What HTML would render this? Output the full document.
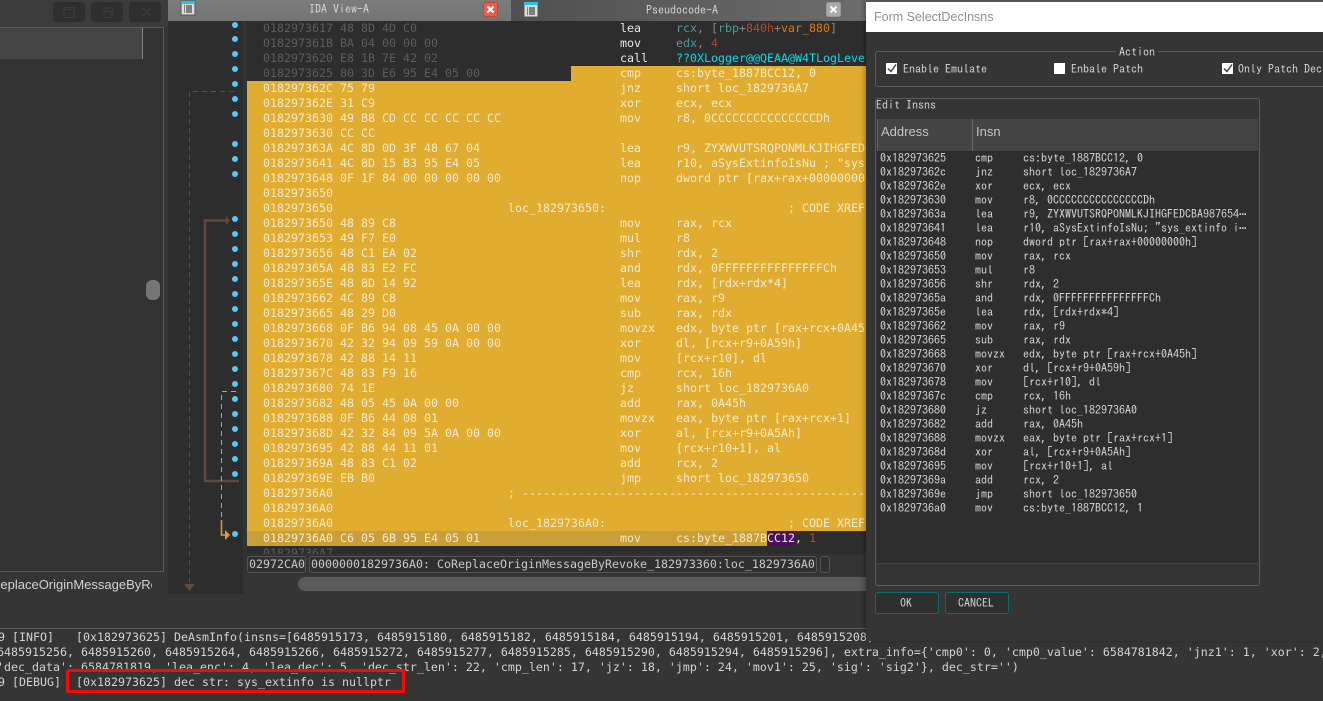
<!DOCTYPE html>
<html><head><meta charset="utf-8"><style>
html,body{margin:0;padding:0;background:#333;}
#r{position:relative;width:1323px;height:701px;overflow:hidden;background:#353535;font-family:"DejaVu Sans Mono",monospace;}
#r div,#r pre,#r svg{position:absolute;margin:0;}
pre{font:11.63px/15px "DejaVu Sans Mono",monospace;color:#f6ead0;white-space:pre;}
.d{color:#5c5c5c}.w{color:#e8e8e8}.t{color:#4f9a9a}.r{color:#b8452c}.o{color:#e07a10}.g{color:#8a8a8a}.c{color:#00dcec}
.log{font:11.63px/15px "DejaVu Sans Mono",monospace;color:#d2d2d2;white-space:pre;}
#r pre.tb{font:12px/14px "IPAGothic",monospace;color:#d4d4d4;white-space:pre;}
.lbl{font:12px/14px "IPAGothic",monospace;color:#d4d4d4;white-space:pre;}
.dot{width:6px;height:6px;border-radius:50%;background:#55c8f8;left:232px;}
.box{border:1px solid #555;border-radius:3px;box-sizing:border-box;background:#303030;}
.btn{background:#2f2f2f;border-radius:3px;top:2px;height:20px;width:32px;}
.cb{width:11px;height:11px;background:#fff;}
</style></head><body><div id="r">

<!-- left panel -->
<div style="left:0;top:0;width:168px;height:27px;background:#3c3c3c"></div>
<div class="btn" style="left:53px"></div>
<div class="btn" style="left:91px"></div>
<div class="btn" style="left:129px"></div>
<svg style="left:53px;top:2px" width="108" height="20"><path d="M11 5.500h10v10h-10zM11 7.500h10" fill="none" stroke="#3c3c3c"/><path d="M51 9.500h7v6h-7zM53 9v-3h7v6h-2" fill="none" stroke="#3c3c3c"/><path d="M90 6l8 8M98 6l-8 8" fill="none" stroke="#3c3c3c" stroke-width="1.500"/></svg>
<div style="left:0;top:27px;width:164px;height:545px;box-sizing:border-box;border:1px solid #5c5c5c;border-left:0;background:#333"></div>
<div style="left:0;top:28px;width:142px;height:31px;background:#454545"></div>
<div style="left:142px;top:28px;width:1px;height:31px;background:#888"></div>
<div style="left:146px;top:280px;width:14px;height:20px;border-radius:6px;background:#767676"></div>
<div style="left:0;top:577px;width:152px;height:16px;overflow:hidden;font:13px/16px 'Liberation Sans',sans-serif;color:#d2d2d2;white-space:nowrap"><span style="position:relative;left:-9px">ReplaceOriginMessageByRevoke</span></div>

<!-- gutter -->
<div style="left:168px;top:21px;width:75px;height:573px;background:#2d2d2d"></div>
<div style="left:243px;top:21px;width:4px;height:533px;background:#333"></div>

<!-- tabs -->
<div style="left:168px;top:0;width:343px;height:21px;background:linear-gradient(#7c7c7c,#747474)"></div>
<div style="left:511px;top:0;width:355px;height:21px;background:linear-gradient(90deg,#505050,#6c6c6c)"></div>
<svg style="left:180px;top:0" width="16" height="16" viewBox="0 0 16 16"><rect x="1" y="1" width="14" height="14" fill="#dcdcdc" stroke="#555"/><rect x="1" y="1" width="14" height="3" fill="#18c8f0"/><path d="M4 6h1M4 8h1M4 10h1M4 12h1M6 6h6M6 8h6M6 10h6M6 12h6" stroke="#222"/></svg>
<svg style="left:523px;top:2px" width="16" height="16" viewBox="0 0 16 16"><rect x="1" y="1" width="14" height="14" fill="#dcdcdc" stroke="#555"/><rect x="1" y="0" width="14" height="3" fill="#18c8f0"/><path d="M4 6h1M4 8h1M4 10h1M4 12h1M6 6h6M6 8h6M6 10h6M6 12h6" stroke="#222"/></svg>
<div class="lbl" style="left:309px;top:2px">IDA View-A</div>
<div class="lbl" style="left:646px;top:3px">Pseudocode-A</div>
<svg style="left:483px;top:2px" width="15" height="15" viewBox="0 0 15 15"><rect x=".5" y=".5" width="14" height="14" rx="2" fill="#e8604a" stroke="#c8452f"/><path d="M4.500 4.500l6 6M10.500 4.500l-6 6" stroke="#fff" stroke-width="2"/></svg>
<svg style="left:826px;top:2px" width="15" height="15" viewBox="0 0 15 15"><rect x=".5" y=".5" width="14" height="14" rx="2" fill="#aaa" stroke="#999"/><path d="M4.500 4.500l6 6M10.500 4.500l-6 6" stroke="#fff" stroke-width="2"/></svg>

<!-- listing -->
<div style="left:247px;top:21px;width:619px;height:533px;overflow:hidden;background:#2d2d2d">
<div style="left:324px;top:45px;width:295px;height:15px;background:#e0ad30"></div>
<div style="left:0;top:60px;width:619px;height:450px;background:#e0ad30"></div>
<div style="left:0;top:510px;width:520px;height:15px;background:#c99f3a"></div>
<div style="left:520px;top:510px;width:28px;height:15px;background:#4a1060"></div>
<pre style="left:16px;top:0"><span class="d">0182973617 48 8D 4D C0
018297361B BA 04 00 00 00
0182973620 E8 1B 7E 42 02
0182973625 80 3D E6 95 E4 05 00</span>
018297362C 75 79
018297362E 31 C9
0182973630 49 B8 CD CC CC CC CC CC
0182973630 CC CC
018297363A 4C 8D 0D 3F 48 67 04
0182973641 4C 8D 15 B3 95 E4 05
0182973648 0F 1F 84 00 00 00 00 00
0182973650
0182973650
0182973650 48 89 C8
0182973653 49 F7 E0
0182973656 48 C1 EA 02
018297365A 48 83 E2 FC
018297365E 48 8D 14 92
0182973662 4C 89 C8
0182973665 48 29 D0
0182973668 0F B6 94 08 45 0A 00 00
0182973670 42 32 94 09 59 0A 00 00
0182973678 42 88 14 11
018297367C 48 83 F9 16
0182973680 74 1E
0182973682 48 05 45 0A 00 00
0182973688 0F B6 44 08 01
018297368D 42 32 84 09 5A 0A 00 00
0182973695 42 88 44 11 01
018297369A 48 83 C1 02
018297369E EB B0
01829736A0
01829736A0
01829736A0
01829736A0 C6 05 6B 95 E4 05 01
<span class="d">01829736A7</span></pre>
<pre style="left:261px;top:180px">loc_182973650:</pre>
<pre style="left:261px;top:465px">; ---------------------------------------------------</pre>
<pre style="left:261px;top:495px">loc_1829736A0:</pre>
<pre style="left:541px;top:180px">; CODE XREF</pre>
<pre style="left:541px;top:495px">; CODE XREF</pre>
<pre style="left:373px;top:0"><span class="w">lea
mov
call</span>
cmp
jnz
xor
mov

lea
lea
nop


mov
mul
shr
and
lea
mov
sub
movzx
xor
mov
cmp
jz
add
movzx
xor
mov
add
jmp



mov</pre>
<pre style="left:429px;top:0"><span class="t">rcx</span><span class="g">, [</span><span class="t">rbp</span><span class="g">+</span><span class="r">840h</span><span class="g">+</span><span class="o">var_880</span><span class="g">]</span>
<span class="t">edx</span><span class="g">, </span><span class="r">4</span>
<span class="c">??0XLogger@@QEAA@W4TLogLevel</span>
cs:byte_1887BCC12, 0
short loc_1829736A7
ecx, ecx
r8, 0CCCCCCCCCCCCCCCDh

r9, ZYXWVUTSRQPONMLKJIHGFEDCBA987654
r10, aSysExtinfoIsNu ; "sys_extinfo is nullptr"
dword ptr [rax+rax+00000000h]


rax, rcx
r8
rdx, 2
rdx, 0FFFFFFFFFFFFFFFCh
rdx, [rdx+rdx*4]
rax, r9
rax, rdx
edx, byte ptr [rax+rcx+0A45h]
dl, [rcx+r9+0A59h]
[rcx+r10], dl
rcx, 16h
short loc_1829736A0
rax, 0A45h
eax, byte ptr [rax+rcx+1]
al, [rcx+r9+0A5Ah]
[rcx+r10+1], al
rcx, 2
short loc_182973650



cs:byte_1887BCC12, <span class="r">1</span></pre>
</div>

<!-- gutter dots -->
<div class="dot" style="top:22px"></div><div class="dot" style="top:36px"></div><div class="dot" style="top:51px"></div><div class="dot" style="top:66px"></div><div class="dot" style="top:81px"></div><div class="dot" style="top:96px"></div><div class="dot" style="top:111px"></div><div class="dot" style="top:141px"></div><div class="dot" style="top:156px"></div><div class="dot" style="top:171px"></div>
<div class="dot" style="top:216px"></div><div class="dot" style="top:231px"></div><div class="dot" style="top:246px"></div><div class="dot" style="top:261px"></div><div class="dot" style="top:276px"></div><div class="dot" style="top:291px"></div><div class="dot" style="top:306px"></div><div class="dot" style="top:321px"></div><div class="dot" style="top:336px"></div><div class="dot" style="top:351px"></div><div class="dot" style="top:366px"></div><div class="dot" style="top:381px"></div><div class="dot" style="top:396px"></div><div class="dot" style="top:411px"></div><div class="dot" style="top:426px"></div><div class="dot" style="top:441px"></div><div class="dot" style="top:456px"></div><div class="dot" style="top:471px"></div><div class="dot" style="top:531px"></div>
<svg style="left:168px;top:21px" width="75" height="573" viewBox="168 21 75 573">
<path d="M234 91.500H189.500V584" fill="none" stroke="#64483a" stroke-dasharray="5 4"/>
<path d="M184 584h11l-5.500 7z" fill="#64483a"/>
<path d="M239 481H205V220.500H226" fill="none" stroke="#64483a" stroke-width="2.500"/>
<path d="M226 216l4 4.500-4 4.500z" fill="#64483a"/>
<path d="M236 391.500H221.500V520" fill="none" stroke="#e0a030" stroke-dasharray="5 4"/>
<path d="M221.500 520V535H226" fill="none" stroke="#e0a030" stroke-width="1.500"/>
<path d="M225 530l5 5-5 5z" fill="#e0a030"/>
</svg>

<!-- status row -->
<div style="left:243px;top:554px;width:623px;height:21px;background:#333"></div>
<div class="box" style="left:247px;top:556px;width:59px;height:17px"></div>
<div class="box" style="left:309px;top:556px;width:508px;height:17px"></div>
<div class="box" style="left:820px;top:556px;width:10px;height:17px"></div>
<div class="log" style="left:249px;top:557px;color:#c8c8c8">02972CA0</div>
<div class="log" style="left:311px;top:557px;color:#c8c8c8">00000001829736A0: CoReplaceOriginMessageByRevoke_182973360:loc_1829736A0</div>
<div style="left:298px;top:577px;width:568px;height:14px;border-radius:7px 0 0 7px;background:#5a5a5a"></div>

<!-- log -->
<div style="left:0;top:628px;width:866px;height:1px;background:#5e5e5e"></div>
<div class="log" style="left:-2px;top:630px">9 [INFO]</div>
<div class="log" style="left:76px;top:630px">[0x182973625] DeAsmInfo(insns=[6485915173, 6485915180, 6485915182, 6485915184, 6485915194, 6485915201, 6485915208,</div>
<div class="log" style="left:-3px;top:645px">6485915256, 6485915260, 6485915264, 6485915266, 6485915272, 6485915277, 6485915285, 6485915290, 6485915294, 6485915296], extra_info={'cmp0': 0, 'cmp0_value': 6584781842, 'jnz1': 1, 'xor': 2,</div>
<div class="log" style="left:-3px;top:660px">'dec_data': 6584781819, 'lea_enc': 4, 'lea_dec': 5, 'dec_str_len': 22, 'cmp_len': 17, 'jz': 18, 'jmp': 24, 'mov1': 25, 'sig': 'sig2'}, dec_str='')</div>
<div class="log" style="left:-2px;top:675px">9 [DEBUG]</div>
<div class="log" style="left:76px;top:675px">[0x182973625] dec str: sys_extinfo is nullptr</div>
<div style="left:66px;top:669px;width:339px;height:24px;box-sizing:border-box;border:3px solid #f40a0a;border-radius:2px"></div>

<!-- dialog -->
<div style="left:866px;top:0;width:457px;height:641px;background:#353535;box-shadow:-2px 0 4px rgba(0,0,0,.25)"></div>
<div style="left:866px;top:0;width:457px;height:2px;background:#555"></div>
<div style="left:866px;top:2px;width:457px;height:30px;background:#fff"></div>
<div style="left:874px;top:9px;font:12.500px/16px 'Liberation Sans',sans-serif;color:#8f8f8f;white-space:nowrap">Form SelectDecInsns</div>

<div style="left:875px;top:51px;width:460px;height:36px;box-sizing:border-box;border:1px solid #5c5c5c;border-radius:3px"></div>
<div class="lbl" style="left:1116px;top:45px;background:#353535;padding:0 3px">Action</div>
<div class="cb" style="left:886px;top:63px"></div><svg style="left:886px;top:63px" width="11" height="11"><path d="M2 5.500l3 3 5-7" fill="none" stroke="#444" stroke-width="1.500"/></svg>
<div class="lbl" style="left:903px;top:62px">Enable Emulate</div>
<div class="cb" style="left:1054px;top:63px"></div>
<div class="lbl" style="left:1071px;top:62px">Enbale Patch</div>
<div class="cb" style="left:1222px;top:63px"></div><svg style="left:1222px;top:63px" width="11" height="11"><path d="M2 5.500l3 3 5-7" fill="none" stroke="#444" stroke-width="1.500"/></svg>
<div class="lbl" style="left:1238px;top:62px">Only Patch Dec</div>

<div style="left:875px;top:98px;width:385px;height:488px;box-sizing:border-box;border:1px solid #5c5c5c;border-radius:3px"></div>
<div class="lbl" style="left:876px;top:98px">Edit Insns</div>
<div style="left:877px;top:119px;width:381px;height:32px;background:#444"></div>
<div style="left:877px;top:119px;width:1px;height:32px;background:#666"></div>
<div style="left:972px;top:119px;width:1px;height:32px;background:#666"></div>
<div style="left:881px;top:124px;font:13px/16px 'Liberation Sans',sans-serif;color:#c4c4c4">Address</div>
<div style="left:976px;top:124px;font:13px/16px 'Liberation Sans',sans-serif;color:#c4c4c4">Insn</div>
<div style="left:877px;top:151px;width:381px;height:412px;background:#2e2e2e;border-bottom:1px solid #444"></div>
<pre class="tb" style="left:880px;top:151px">0x182973625
0x18297362c
0x18297362e
0x182973630
0x18297363a
0x182973641
0x182973648
0x182973650
0x182973653
0x182973656
0x18297365a
0x18297365e
0x182973662
0x182973665
0x182973668
0x182973670
0x182973678
0x18297367c
0x182973680
0x182973682
0x182973688
0x18297368d
0x182973695
0x18297369a
0x18297369e
0x1829736a0</pre>
<pre class="tb" style="left:975px;top:151px">cmp
jnz
xor
mov
lea
lea
nop
mov
mul
shr
and
lea
mov
sub
movzx
xor
mov
cmp
jz
add
movzx
xor
mov
add
jmp
mov</pre>
<pre class="tb" style="left:1023px;top:151px">cs:byte_1887BCC12, 0
short loc_1829736A7
ecx, ecx
r8, 0CCCCCCCCCCCCCCCDh
r9, ZYXWVUTSRQPONMLKJIHGFEDCBA987654&#8943;
r10, aSysExtinfoIsNu; "sys_extinfo i&#8943;
dword ptr [rax+rax+00000000h]
rax, rcx
r8
rdx, 2
rdx, 0FFFFFFFFFFFFFFFCh
rdx, [rdx+rdx*4]
rax, r9
rax, rdx
edx, byte ptr [rax+rcx+0A45h]
dl, [rcx+r9+0A59h]
[rcx+r10], dl
rcx, 16h
short loc_1829736A0
rax, 0A45h
eax, byte ptr [rax+rcx+1]
al, [rcx+r9+0A5Ah]
[rcx+r10+1], al
rcx, 2
short loc_182973650
cs:byte_1887BCC12, 1</pre>

<div style="left:875px;top:592px;width:64px;height:22px;box-sizing:border-box;border:1px solid #0a6e6e;border-radius:3px;background:#2f2f2f"></div>
<div class="lbl" style="left:900px;top:596px">OK</div>
<div style="left:945px;top:592px;width:64px;height:22px;box-sizing:border-box;border:1px solid #0a6e6e;border-radius:3px;background:#2f2f2f"></div>
<div class="lbl" style="left:958px;top:596px">CANCEL</div>

</div></body></html>
